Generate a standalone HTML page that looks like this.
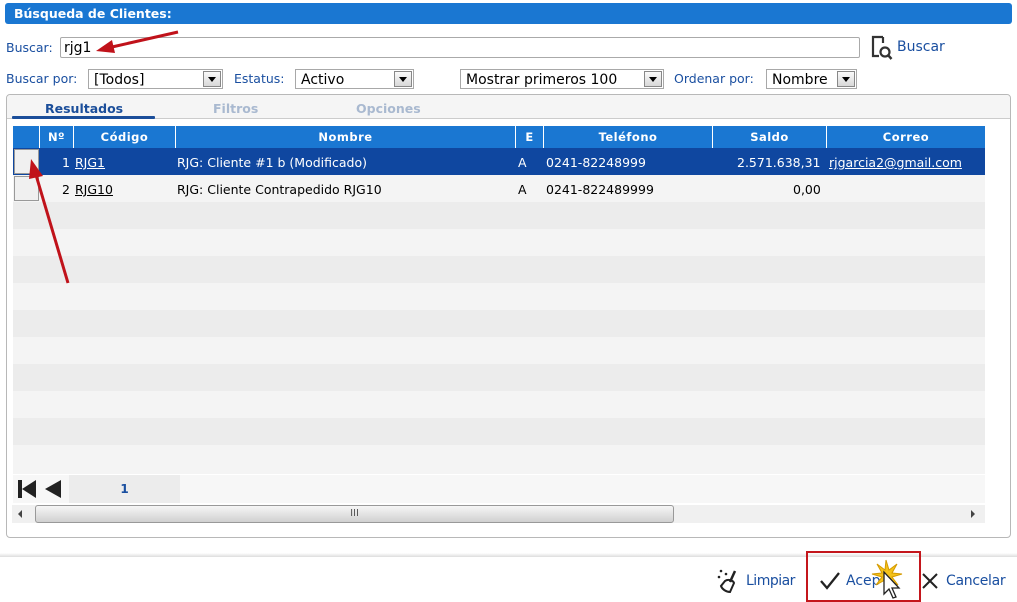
<!DOCTYPE html>
<html><head><meta charset="utf-8"><style>
*{box-sizing:border-box;margin:0;padding:0}
body{width:1017px;height:602px;background:#fff;font-family:"DejaVu Sans","Liberation Sans",sans-serif;font-size:12px;color:#000;position:relative;overflow:hidden}
.a{position:absolute}
.lbl{color:#1a4fa0;font-size:12.5px}
.sel{position:absolute;height:20px;border:1px solid #a8a8a8;background:#fff;font-size:14px;padding:1px 5px;line-height:18px;white-space:nowrap}
.sel i{position:absolute;right:1px;top:1px;width:18px;height:16px;border:1px solid #888;background:linear-gradient(#fafafa,#d8d8d8)}
.sel i:after{content:"";position:absolute;left:4px;top:5px;border-left:4px solid transparent;border-right:4px solid transparent;border-top:5px solid #000}
.th{position:absolute;top:126px;height:22px;background:#1a77d2;color:#fff;font-weight:bold;font-size:11.5px;text-align:center;line-height:22px;border-left:1px solid #fff;letter-spacing:.5px}
.row{position:absolute;left:13px;width:972px;height:27px}
.c{position:absolute;top:1px;line-height:27px;font-size:12.5px;white-space:nowrap}
u{text-decoration:underline}
</style></head><body>
<div class="a" style="left:5px;top:3px;width:1007px;height:21px;background:#1a77d2;border-radius:3px;color:#fff;font-weight:bold;font-size:12.5px;line-height:21px;padding-left:9px">Búsqueda de Clientes:</div>

<div class="a lbl" style="left:6px;top:40px">Buscar:</div>
<div class="a" style="left:60px;top:37px;width:800px;height:21px;border:1px solid #aaa;border-radius:2px;font-size:14px;padding-left:3px;line-height:20px">rjg1</div>
<svg class="a" style="left:869px;top:35px" width="24" height="26" viewBox="0 0 24 26"><path d="M14 2H4v19h6" fill="none" stroke="#333" stroke-width="2.2"/><path d="M14 2v6" stroke="#333" stroke-width="2.2"/><circle cx="16" cy="17" r="4.5" fill="none" stroke="#333" stroke-width="2.2"/><path d="M19 20l3.5 4" stroke="#333" stroke-width="2.5"/></svg>
<div class="a lbl" style="left:897px;top:39px;font-size:14px">Buscar</div>

<div class="a lbl" style="left:6px;top:71px">Buscar por:</div>
<div class="sel" style="left:88px;top:69px;width:135px">[Todos]<i></i></div>
<div class="a lbl" style="left:234px;top:71px">Estatus:</div>
<div class="sel" style="left:295px;top:69px;width:119px">Activo<i></i></div>
<div class="sel" style="left:460px;top:69px;width:204px">Mostrar primeros 100<i></i></div>
<div class="a lbl" style="left:674px;top:71px">Ordenar por:</div>
<div class="sel" style="left:766px;top:69px;width:91px">Nombre<i></i></div>

<div class="a" style="left:6px;top:94px;width:1005px;height:444px;border:1px solid #b8b8b8;border-radius:4px;background:#fff"></div>
<div class="a" style="left:7px;top:95px;width:1003px;height:24px;background:#f5f5f5;border-bottom:1px solid #ccc;border-radius:4px 4px 0 0"></div>
<div class="a" style="left:45px;top:101px;font-weight:bold;color:#1b4e9a;font-size:12.5px">Resultados</div>
<div class="a" style="left:12px;top:116px;width:143px;height:3px;background:#1b4e9a;border-radius:1px"></div>
<div class="a" style="left:213px;top:101px;font-weight:bold;color:#a9b9d0;font-size:12.5px">Filtros</div>
<div class="a" style="left:356px;top:101px;font-weight:bold;color:#a9b9d0;font-size:12.5px">Opciones</div>

<div class="th" style="left:13px;width:26px;border-left:0"></div>
<div class="th" style="left:39px;width:34px">Nº</div>
<div class="th" style="left:73px;width:102px">Código</div>
<div class="th" style="left:175px;width:340px">Nombre</div>
<div class="th" style="left:515px;width:28px">E</div>
<div class="th" style="left:543px;width:169px">Teléfono</div>
<div class="th" style="left:712px;width:114px">Saldo</div>
<div class="th" style="left:826px;width:159px">Correo</div>

<div class="row" style="top:148px;background:#0f47a0;color:#fff">
<div class="a" style="left:1px;top:1px;width:25px;height:25px;background:#f0f0f0;border:1px solid #999"></div>
<div class="c" style="left:49px">1</div><div class="c" style="left:62px"><u>RJG1</u></div>
<div class="c" style="left:164px">RJG: Cliente #1 b (Modificado)</div>
<div class="c" style="left:505px">A</div><div class="c" style="left:533px">0241-82248999</div>
<div class="c" style="left:724px">2.571.638,31</div><div class="c" style="left:816px"><u>rjgarcia2@gmail.com</u></div>
</div>
<div class="row" style="top:175px;background:#f4f4f4">
<div class="a" style="left:1px;top:1px;width:25px;height:25px;background:#f0f0f0;border:1px solid #999"></div>
<div class="c" style="left:49px">2</div><div class="c" style="left:62px"><u>RJG10</u></div>
<div class="c" style="left:164px">RJG: Cliente Contrapedido RJG10</div>
<div class="c" style="left:505px">A</div><div class="c" style="left:533px">0241-822489999</div>
<div class="c" style="left:780px">0,00</div>
</div>
<div class="row" style="top:202px;background:#ececec"></div>
<div class="row" style="top:229px;background:#f4f4f4"></div>
<div class="row" style="top:256px;background:#ececec"></div>
<div class="row" style="top:283px;background:#f4f4f4"></div>
<div class="row" style="top:310px;background:#ececec"></div>
<div class="row" style="top:337px;background:#f4f4f4"></div>
<div class="row" style="top:364px;background:#ececec"></div>
<div class="row" style="top:391px;background:#f4f4f4"></div>
<div class="row" style="top:418px;background:#ececec"></div>
<div class="row" style="top:445px;background:#f4f4f4;height:29px"></div>
<div class="row" style="top:475px;background:#f7f7f7;height:28px"></div>
<svg class="a" style="left:17px;top:479px" width="48" height="20"><rect x="1" y="1" width="4" height="18" fill="#222"/><path d="M5 10L19 1V19Z" fill="#222"/><path d="M28 10L44 1V19Z" fill="#222"/></svg>
<div class="a" style="left:69px;top:475px;width:111px;height:28px;background:#ececec;color:#1a4fa0;font-weight:bold;text-align:center;line-height:29px">1</div>

<div class="a" style="left:12px;top:505px;width:973px;height:18px;background:#f0f0f0"></div>
<div class="a" style="left:35px;top:505px;width:639px;height:18px;border:1px solid #999;border-radius:3px;background:linear-gradient(#f6f6f6,#d0d0d0);text-align:center;font-size:10px;line-height:16px;color:#555">III</div>
<div class="a" style="left:18px;top:510px;border-top:4px solid transparent;border-bottom:4px solid transparent;border-right:4px solid #444"></div>
<div class="a" style="left:971px;top:510px;border-top:4px solid transparent;border-bottom:4px solid transparent;border-left:4px solid #444"></div>

<div class="a" style="left:0;top:553px;width:1017px;height:4px;background:linear-gradient(#fff,#ddd)"></div>
<svg class="a" style="left:717px;top:568px" width="26" height="26" viewBox="0 0 26 26"><path d="M18 3L13 14" stroke="#222" stroke-width="2.5"/><path d="M8 13c3-2 8-1 9 2l-4 9c-4 0-8-3-9-6z" fill="none" stroke="#222" stroke-width="2"/><circle cx="4" cy="3" r="1.3" fill="#222"/><circle cx="9" cy="6" r="1.3" fill="#222"/><circle cx="2" cy="9" r="1.3" fill="#222"/></svg>
<div class="a lbl" style="left:746px;top:573px;font-size:14px;letter-spacing:-.5px">Limpiar</div>
<div class="a" style="left:806px;top:551px;width:115px;height:51px;border:2px solid #c4161c"></div>
<svg class="a" style="left:819px;top:572px" width="22" height="18"><path d="M2 9l6 7L20 1" fill="none" stroke="#222" stroke-width="2.3"/></svg>
<div class="a lbl" style="left:846px;top:573px;font-size:14px">Acep</div>
<svg class="a" style="left:868px;top:558px" width="40" height="42"><path d="M18 2l3 10 8-6-5 9 10 1-10 3 6 8-9-5-2 10-2-10-9 5 6-8-10-3 10-1-5-9 8 6z" fill="#f4c21a" stroke="#d49a00"/><path d="M16 14v22l5-5 4 9 3-1-4-9 7 0z" fill="#fff" stroke="#222" stroke-width="1.3"/></svg>
<svg class="a" style="left:921px;top:572px" width="18" height="18"><path d="M2 2l14 14M16 2L2 16" stroke="#222" stroke-width="2"/></svg>
<div class="a lbl" style="left:946px;top:573px;font-size:14px;letter-spacing:-.3px">Cancelar</div>

<svg class="a" style="left:0;top:0" width="1017" height="602">
<path d="M178 32L112 47" stroke="#c0121a" stroke-width="3"/><path d="M96 51L112 40L115 53Z" fill="#c0121a"/>
<path d="M68 283L36 175" stroke="#c0121a" stroke-width="3"/><path d="M31 159L43 176L29 179Z" fill="#c0121a"/>
</svg>
</body></html>
